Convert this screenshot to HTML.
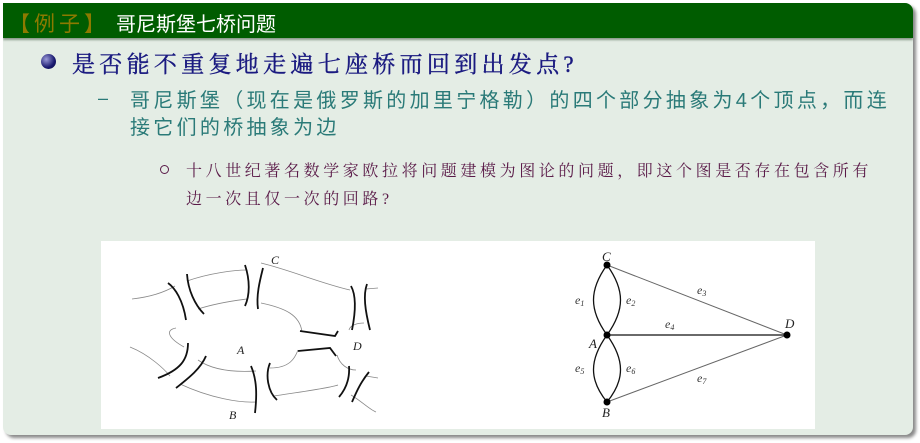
<!DOCTYPE html>
<html><head><meta charset="utf-8"><style>
*{margin:0;padding:0}
body{width:920px;height:443px;background:#fff;position:relative;overflow:hidden;font-family:"Liberation Sans","Noto Sans CJK SC",sans-serif}
.box{position:absolute;left:3px;top:3px;width:910px;height:432px;background:#e4ede5;border-radius:0 8px 8px 8px;box-shadow:3px 3px 3px #8a8a8a;overflow:hidden}
.hd{position:absolute;left:0;top:0;width:910px;height:35px;background:#005c00;box-shadow:0 2px 2px #8a9a8a}
.hd span{position:absolute;top:5px;font-size:20px;white-space:nowrap}
.t{position:absolute;white-space:nowrap}
</style></head><body>
<div class="box">
<div class="hd"><span style="left:6px;color:#8c7a00;letter-spacing:4px;font-size:21px">【例子】</span><span style="left:113px;color:#fff">哥尼斯堡七桥问题</span></div>
</div>
<div style="position:absolute;left:41px;top:54px;width:15px;height:15px;border-radius:50%;background:radial-gradient(circle at 35% 35%,#9a9ad8,#1a1a70 60%,#0a0a40)"></div>
<div class="t" style="left:72px;top:46px;font-size:23px;letter-spacing:4.3px;color:#1a1a80;-webkit-text-stroke:0.4px #1a1a80;font-family:'Liberation Serif','Noto Serif CJK SC',serif">是否能不重复地走遍七座桥而回到出发点?</div>
<div class="t" style="left:98px;top:88px;font-size:18px;color:#2a7a78">–</div>
<div class="t" style="left:130px;top:88px;font-size:20px;letter-spacing:3.3px;color:#2a7a78;line-height:27px">哥尼斯堡（现在是俄罗斯的加里宁格勒）的四个部分抽象为4个顶点，而连<br>接它们的桥抽象为边</div>
<div style="position:absolute;left:160px;top:165px;width:7px;height:7px;border:1px solid #5a1a48;border-radius:50%"></div>
<div class="t" style="left:186px;top:158px;font-size:16px;letter-spacing:3.6px;color:#5a1a48;line-height:28px;font-family:'Liberation Serif','Noto Serif CJK SC',serif">十八世纪著名数学家欧拉将问题建模为图论的问题，即这个图是否存在包含所有<br>边一次且仅一次的回路?</div>
<svg style="position:absolute;left:0;top:0" width="920" height="443">
<rect x="101" y="241" width="714" height="188" fill="#fff"/>
<g fill="none" stroke="#888" stroke-width="0.8">
<path d="M132 299 C150 297 165 292 175 286"/>
<path d="M187 281 C210 273 235 270 247 270"/>
<path d="M261 263 C290 270 320 283 350 290"/>
<path d="M366 289 L378 288"/>
<path d="M198 309 C220 302 240 300 247 299"/>
<path d="M261 303 C285 308 300 315 302 332"/>
<path d="M176 328 C165 330 168 338 184 347"/>
<path d="M349 330 C350 325 358 323 364 323"/>
<path d="M130 347 C150 355 165 370 170 376"/>
<path d="M198 360 C215 372 240 372 256 371"/>
<path d="M270 368 C290 368 295 358 298 350"/>
<path d="M337 355 C340 365 348 370 356 370"/>
<path d="M180 384 C210 398 240 403 256 402"/>
<path d="M274 396 C300 392 330 388 338 385"/>
<path d="M351 395 C360 400 370 410 376 412"/>
<path d="M366 376 L378 378"/>
</g>
<g fill="none" stroke="#111" stroke-width="1.8">
<path d="M168 283 C175 288 183 300 186 320"/>
<path d="M187 274 C188 290 195 305 204 314"/>
<path d="M245 265 C250 280 250 295 245 306"/>
<path d="M263 268 C260 280 256 295 258 309"/>
<path d="M300 331 L335 336 L338 331"/>
<path d="M298 351 L330 348 L336 356"/>
<path d="M351 286 C356 295 356 310 352 330"/>
<path d="M367 284 C363 295 365 310 370 330"/>
<path d="M188 343 C188 360 180 370 158 378"/>
<path d="M206 356 C200 370 186 380 176 388"/>
<path d="M251 366 C257 380 257 395 255 413"/>
<path d="M270 363 C265 375 268 392 277 400"/>
<path d="M349 366 C350 380 345 390 339 397"/>
<path d="M369 372 C360 383 356 393 352 402"/>
</g>
<g font-family="Liberation Serif,serif" font-style="italic" font-size="12" fill="#222">
<text x="271" y="264">C</text><text x="237" y="354">A</text><text x="353" y="350">D</text><text x="229" y="419">B</text>
</g>
<g fill="none" stroke="#111" stroke-width="1.3">
<path d="M607 265 C589 290 589 310 607 335"/>
<path d="M607 265 C625 290 625 310 607 335"/>
<path d="M607 335 C589 360 589 380 607 402"/>
<path d="M607 335 C625 360 625 380 607 402"/>
<path d="M607 335 L787 335"/>
</g>
<path d="M607 265 L787 335 L607 402" fill="none" stroke="#666" stroke-width="1"/>
<g fill="#000"><circle cx="607" cy="265" r="3.5"/><circle cx="607" cy="335" r="3.5"/><circle cx="607" cy="402" r="3.5"/><circle cx="787" cy="335" r="3.5"/></g>
<g font-family="Liberation Serif,serif" font-style="italic" font-size="13" fill="#222">
<text x="602" y="261">C</text><text x="589" y="348">A</text><text x="602" y="417">B</text><text x="785" y="328">D</text>
</g>
<g font-family="Liberation Serif,serif" font-style="italic" font-size="12" fill="#333">
<text x="575" y="304">e<tspan font-size="8" dy="2">1</tspan></text>
<text x="626" y="304">e<tspan font-size="8" dy="2">2</tspan></text>
<text x="697" y="294">e<tspan font-size="8" dy="2">3</tspan></text>
<text x="665" y="328">e<tspan font-size="8" dy="2">4</tspan></text>
<text x="575" y="372">e<tspan font-size="8" dy="2">5</tspan></text>
<text x="626" y="372">e<tspan font-size="8" dy="2">6</tspan></text>
<text x="697" y="382">e<tspan font-size="8" dy="2">7</tspan></text>
</g>
</svg>
</body></html>
